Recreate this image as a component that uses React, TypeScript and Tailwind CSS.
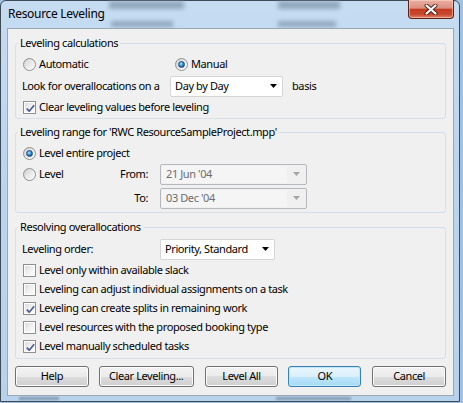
import React from "react";

function Radio({ checked = false }: { checked?: boolean }) {
  return (
    <span className="flex h-[13px] w-[13px] shrink-0 items-center justify-center rounded-full border border-[#8e8f8f] bg-[linear-gradient(135deg,#c9c9c9_0%,#f4f4f4_60%,#ffffff_100%)]">
      <span className="flex h-[9px] w-[9px] items-center justify-center rounded-full bg-[linear-gradient(135deg,#d8d8d8_0%,#fafafa_100%)]">
        {checked && (
          <span className="h-[7px] w-[7px] rounded-full border border-[#1d4f86] bg-[radial-gradient(circle_at_40%_35%,#bfe6fb_0%,#4aa3e0_35%,#125aa0_75%,#0a3a70_100%)]" />
        )}
      </span>
    </span>
  );
}

function Check({ checked = false }: { checked?: boolean }) {
  return (
    <span className="relative flex h-[13px] w-[13px] shrink-0 items-center justify-center border border-[#8e8f8f] bg-white">
      <span className="h-[9px] w-[9px] bg-[linear-gradient(135deg,#dcdcdc_0%,#f0f0f0_50%,#fcfcfc_100%)]" />
      {checked && (
        <svg className="absolute left-[1px] top-[1px]" width="11" height="11" viewBox="0 0 11 11">
          <path d="M1.8 5.6 L4.2 8.2 L9.2 2.2" fill="none" stroke="#4a5d94" strokeWidth="1.7" strokeLinejoin="round" />
        </svg>
      )}
    </span>
  );
}

function Combo({ text, className }: { text: string; className: string }) {
  return (
    <div className={`flex h-[21px] items-center justify-between rounded-[2px] border border-[#d5d5d5] bg-white pl-[4px] pr-[5px] ${className}`}>
      <span>{text}</span>
      <svg width="7" height="4" viewBox="0 0 7 4">
        <path d="M0 0 H7 L3.5 4 Z" fill="#000" />
      </svg>
    </div>
  );
}

function DisabledCombo({ text }: { text: string }) {
  return (
    <div className="flex h-[21px] w-[147px] items-stretch rounded-[2px] border border-[#b5b9bd] bg-[#f0f0f0] p-[1px]">
      <span className="flex flex-1 items-center bg-[#f5f5f5] pl-[4px] text-[#6d6d6d]">{text}</span>
      <span className="flex w-[18px] items-center justify-center">
        <svg width="7" height="4" viewBox="0 0 7 4">
          <path d="M0 0 H7 L3.5 4 Z" fill="#a5a5a5" />
        </svg>
      </span>
    </div>
  );
}

function Btn({ children, className, focused = false }: { children: React.ReactNode; className: string; focused?: boolean }) {
  return (
    <button
      className={`flex h-[21px] items-center justify-center rounded-[3px] border ${
        focused
          ? "border-[#3c7fb1] bg-[linear-gradient(#eaf6fd_0%,#d9f0fc_50%,#bee6fd_50%,#a7d9f5_100%)] shadow-[inset_0_0_0_1px_#bfe7fb]"
          : "border-[#707070] bg-[linear-gradient(#f2f2f2_0%,#ebebeb_50%,#dddddd_50%,#cfcfcf_100%)] shadow-[inset_0_0_0_1px_#fcfcfc]"
      } text-black ${className}`}
    >
      {children}
    </button>
  );
}

export default function App() {
  return (
    <div className="relative h-[403px] w-[463px] overflow-hidden bg-[#9fc2e4] font-['Noto_Sans',sans-serif] text-[11px] tracking-[-0.4px] text-black">
      <div className="relative flex h-[402px] w-[460px] flex-col rounded-t-[6px] border border-[#3f4a57] bg-[linear-gradient(180deg,#c5dcf2_0%,#bcd5ee_40%,#b9d2ec_100%)] pl-[6px] pr-[5px] pb-[5px]">
        {/* blurred background seen through glass */}
        <span className="absolute left-[108px] top-[0px] h-[8px] w-[75px] bg-[#7d92a8] opacity-70 blur-[2px]" />
        <span className="absolute left-[110px] top-[20px] h-[6px] w-[62px] bg-[#7d92a8] opacity-70 blur-[2px]" />
        <span className="absolute left-[277px] top-[0px] h-[8px] w-[62px] bg-[#7d92a8] opacity-70 blur-[2px]" />
        <span className="absolute left-[277px] top-[20px] h-[6px] w-[58px] bg-[#7d92a8] opacity-70 blur-[2px]" />
        <span className="absolute left-[18px] top-[396px] h-[3px] w-[40px] bg-[#6f849a] opacity-70 blur-[1px]" />
        <span className="absolute left-[275px] top-[396px] h-[3px] w-[75px] bg-[#6f849a] opacity-70 blur-[1px]" />

        {/* title bar */}
        <div className="relative flex h-[27px] items-start justify-between">
          <span className="pl-[1px] pt-[5px] text-[12px] leading-[16px] tracking-[-0.3px] text-black">Resource Leveling</span>
          <div className="-mt-[1px] flex h-[19px] w-[46px] items-center justify-center rounded-b-[4px] border border-t-0 border-[#5b2219] bg-[linear-gradient(180deg,#eab0a2_0%,#dc8f7e_45%,#c63c23_52%,#c9482d_80%,#e2866a_100%)] shadow-[inset_0_0_0_1px_rgba(255,220,210,0.5)]">
            <svg width="14" height="11" viewBox="0 0 14 11">
              <path d="M2.5 1.5 L11.5 9.5 M11.5 1.5 L2.5 9.5" stroke="#4b2018" strokeWidth="4" strokeLinecap="round" />
              <path d="M2.5 1.5 L11.5 9.5 M11.5 1.5 L2.5 9.5" stroke="#ffffff" strokeWidth="2.2" strokeLinecap="round" />
            </svg>
          </div>
        </div>

        {/* client area */}
        <div className="relative flex flex-1 flex-col border border-[#9aa8b6] bg-[#f0f0f0] px-[7px] pt-[6px]">
          {/* Group 1 */}
          <fieldset className="rounded-[3px] border border-[#d5dfe5] px-[6px] pb-[1px] pt-[3px]">
            <legend className="-ml-[4px] h-[16px] px-[2px] leading-[16px]">Leveling calculations</legend>
            <div className="flex h-[21px] items-center">
              <div className="flex w-[153px] items-center gap-[3px] pl-[1px]">
                <Radio />
                <span>Automatic</span>
              </div>
              <div className="flex items-center gap-[3px]">
                <Radio checked />
                <span>Manual</span>
              </div>
            </div>
            <div className="flex h-[22px] items-center">
              <span className="w-[148px]">Look for overallocations on a</span>
              <Combo text="Day by Day" className="w-[113px]" />
              <span className="ml-[9px]">basis</span>
            </div>
            <div className="flex h-[20px] items-center gap-[3px] pl-[1px]">
              <Check checked />
              <span>Clear leveling values before leveling</span>
            </div>
          </fieldset>

          {/* Group 2 */}
          <fieldset className="mt-[5px] rounded-[3px] border border-[#d5dfe5] px-[6px] pb-[3px] pt-[3px]">
            <legend className="-ml-[4px] h-[16px] px-[2px] leading-[16px]">Leveling range for 'RWC ResourceSampleProject.mpp'</legend>
            <div className="flex h-[20px] items-center gap-[3px] pl-[1px]">
              <Radio checked />
              <span>Level entire project</span>
            </div>
            <div className="flex h-[22px] items-center">
              <div className="flex w-[126px] items-center">
                <div className="flex items-center gap-[3px] pl-[1px]">
                  <Radio />
                  <span>Level</span>
                </div>
                <span className="ml-auto">From:</span>
              </div>
              <div className="ml-[12px]">
                <DisabledCombo text="21 Jun '04" />
              </div>
            </div>
            <div className="mt-[2px] flex h-[22px] items-center">
              <div className="flex w-[126px] items-center justify-end">
                <span>To:</span>
              </div>
              <div className="ml-[12px]">
                <DisabledCombo text="03 Dec '04" />
              </div>
            </div>
          </fieldset>

          {/* Group 3 */}
          <fieldset className="mt-[6px] rounded-[3px] border border-[#d5dfe5] px-[6px] pb-[2px] pt-[3px]">
            <legend className="-ml-[4px] h-[16px] px-[2px] leading-[16px]">Resolving overallocations</legend>
            <div className="flex h-[22px] items-center">
              <span className="w-[138px]">Leveling order:</span>
              <Combo text="Priority, Standard" className="w-[115px]" />
            </div>
            <div className="mt-[1px] flex flex-col">
              {[
                { t: "Level only within available slack", c: false },
                { t: "Leveling can adjust individual assignments on a task", c: false },
                { t: "Leveling can create splits in remaining work", c: true },
                { t: "Level resources with the proposed booking type", c: false },
                { t: "Level manually scheduled tasks", c: true },
              ].map((r) => (
                <div key={r.t} className="flex h-[19px] items-center gap-[3px] pl-[1px]">
                  <Check checked={r.c} />
                  <span>{r.t}</span>
                </div>
              ))}
            </div>
          </fieldset>

          {/* Buttons */}
          <div className="mt-[7px] flex">
            <Btn className="w-[74px]">Help</Btn>
            <Btn className="ml-[10px] w-[95px]">Clear Leveling...</Btn>
            <Btn className="ml-[11px] w-[74px]">Level All</Btn>
            <Btn className="ml-[10px] w-[73px]" focused>OK</Btn>
            <Btn className="ml-[11px] w-[74px]">Cancel</Btn>
          </div>
        </div>
      </div>
    </div>
  );
}
